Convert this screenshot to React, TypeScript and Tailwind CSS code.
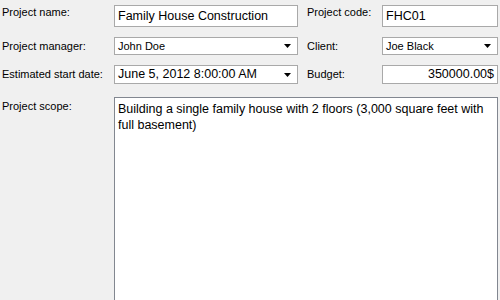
import React from 'react';

const labelFont = { fontFamily: '"Liberation Sans", Arial, sans-serif' };

function Arrow() {
  return (
    <svg width="7" height="4" viewBox="0 0 7 4" className="shrink-0">
      <path d="M0 0H7L3.5 4Z" fill="#000" />
    </svg>
  );
}

function TextBox({ value, big, right, className }: { value: string; big?: boolean; right?: boolean; className?: string }) {
  return (
    <div
      className={`flex items-center bg-white border border-[#a9a9a9] px-[3px] text-black ${big ? 'text-[12.5px]' : 'text-[11px]'} ${right ? 'justify-end' : ''} ${className ?? ''}`}
    >
      <span className="whitespace-nowrap leading-none">{value}</span>
    </div>
  );
}

function Combo({ value, big, className }: { value: string; big?: boolean; className?: string }) {
  return (
    <div
      className={`flex items-center justify-between bg-white border border-[#a9a9a9] pl-[3px] pr-[6px] text-black ${big ? 'text-[12.5px]' : 'text-[11px]'} ${className ?? ''}`}
    >
      <span className="whitespace-nowrap leading-none">{value}</span>
      <Arrow />
    </div>
  );
}

function Label({ children, className }: { children: React.ReactNode; className?: string }) {
  return <div className={`text-[11px] leading-[13px] text-black whitespace-nowrap ${className ?? ''}`}>{children}</div>;
}

export default function App() {
  return (
    <div className="w-[500px] h-[300px] overflow-hidden bg-[#f0f0f0] pt-[5px]" style={labelFont}>
      <div className="grid grid-cols-[114px_184px_84px_116px]">
        {/* Row 1 */}
        <Label className="pl-[2px] pt-[1px]">Project name:</Label>
        <TextBox value="Family House Construction" big className="h-[22px]" />
        <Label className="pl-[9px] pt-[1px]">Project code:</Label>
        <TextBox value="FHC01" big className="h-[22px]" />

        {/* Row 2 */}
        <Label className="pl-[2px] pt-[3px] mt-[10px]">Project manager:</Label>
        <Combo value="John Doe" className="h-[18px] mt-[10px]" />
        <Label className="pl-[9px] pt-[3px] mt-[10px]">Client:</Label>
        <Combo value="Joe Black" className="h-[18px] mt-[10px]" />

        {/* Row 3 */}
        <Label className="pl-[2px] pt-[3px] mt-[10px]">Estimated start date:</Label>
        <Combo value="June 5, 2012 8:00:00 AM" big className="h-[19px] mt-[10px]" />
        <Label className="pl-[9px] pt-[3px] mt-[10px]">Budget:</Label>
        <TextBox value="350000.00$" big right className="h-[19px] mt-[10px]" />
      </div>

      {/* Scope */}
      <div className="flex mt-[13px]">
        <Label className="w-[114px] shrink-0 pl-[2px] pt-[3px]">Project scope:</Label>
        <div className="w-[384px] h-[220px] bg-white border border-[#828790] px-[3px] pt-[3px] text-[12.5px] leading-[16px] text-black">
          Building a single family house with 2 floors (3,000 square feet with full basement)
        </div>
      </div>
    </div>
  );
}
